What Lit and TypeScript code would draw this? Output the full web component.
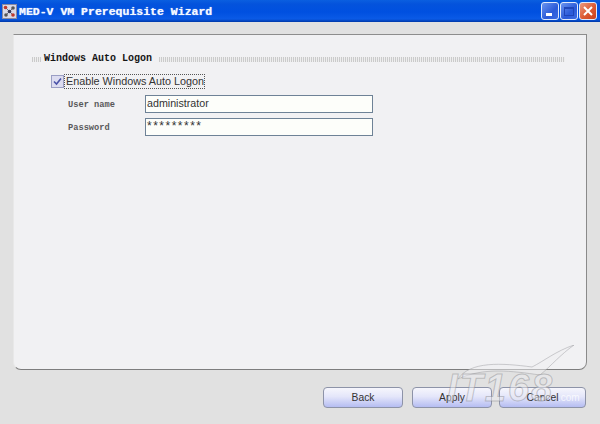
import { LitElement, html, css } from "lit";
import { customElement } from "lit/decorators.js";

@customElement("app-root")
export class AppRoot extends LitElement {
  static styles = css`
    :host { display: block; width: 600px; height: 424px; overflow: hidden; position: relative; }
    .win { width: 600px; height: 424px; background: #e1e1e1; display: flex; flex-direction: column; font-family: "Liberation Sans", Arial, sans-serif; color: #222; }
    .title { height: 22px; flex: none; background: linear-gradient(#0a5fe0 0, #0453dc 4px, #0050e0 12px, #0a5ae6 19px, #0038a8 22px); display: flex; align-items: center; padding-left: 2px; gap: 2px; }
    .appicon { width: 15px; height: 15px; flex: none; display: block; }
    .ttext { font: bold 11.5px "Liberation Mono", monospace; color: #f4f8ff; white-space: pre; flex: 1; text-shadow: 0 0 1px #cfe0ff; }
    .tb { display: flex; gap: 1px; padding-right: 3px; }
    .btn { width: 18px; height: 18px; border: 1px solid #dfe9fb; border-radius: 3px; box-sizing: border-box; display: flex; align-items: center; justify-content: center; background: linear-gradient(135deg, #6a94ef, #2a5ad8 60%, #3c6ce4); }
    .btn svg { display: block; }
    .btn.close { background: linear-gradient(135deg, #eb9a80, #dc5a33 55%, #c8401e); }
    .main { flex: 1; padding: 12px 13px 0 13px; }
    .panel { height: 336px; box-sizing: border-box; background: #f1f1f3; border-top: 1px solid #8d8d8d; border-right: 1px solid #8a8a8a; border-bottom: 1px solid #7d7d7d; border-left: 1px solid #e8e8e8; border-radius: 0 0 8px 8px; padding: 16px 21px 0 18px; }
    .group { display: flex; align-items: center; height: 14px; }
    .dots { height: 5px; margin-top: 3px; background-image: repeating-linear-gradient(90deg, #c6c6c6 0 1px, #eeeeee 1px 2px); opacity: .9; }
    .dots.l { width: 9px; margin-right: 3px; }
    .dots.r { flex: 1; }
    .gtext { font: bold 10px "Liberation Mono", monospace; color: #151515; padding: 0 7px 0 0; white-space: pre; }
    .check { display: flex; align-items: center; margin: 9px 0 0 19px; height: 15px; }
    .box { width: 11px; height: 11px; border: 1px solid #9a9ec4; background: #dcdcf0; box-sizing: content-box; display: block; }
    .ctext { font-size: 10.8px; color: #333; border: 1px dotted #555; padding: 0 0 0 1px; line-height: 13px; white-space: pre; }
    .row { display: flex; align-items: center; margin-left: 36px; }
    .row.u { margin-top: 6px; }
    .row.p { margin-top: 5px; }
    .lbl { width: 77px; padding-top: 2px; font: bold 8.7px "Liberation Mono", monospace; color: #333; opacity: .8; white-space: pre; }
    .inp { width: 228px; height: 18px; box-sizing: border-box; border: 1px solid #6e8296; background: #fdfefa; font-size: 10.7px; color: #333; padding-left: 1px; line-height: 15px; white-space: pre; }
    .pw { font-size: 12px; letter-spacing: 1.5px; }
    .foot { flex: 1; display: flex; justify-content: flex-end; padding: 17px 14px 0 0; box-sizing: border-box; }
    .b { width: 80px; height: 21px; box-sizing: border-box; border: 1px solid #8d93a8; border-radius: 4px; background: linear-gradient(#f6f6fc, #e4e6fa 45%, #b5bdf2); font-size: 10.3px; color: #333; display: flex; align-items: center; justify-content: center; }
    .b.apply { margin: 0 7px 0 9px; }
    .b.cancel { width: 87px; }
    .wm { position: absolute; left: 440px; top: 345px; width: 160px; height: 79px; pointer-events: none; }
    .wmt { position: absolute; left: 7px; top: 22px; font: italic bold 38px "Liberation Sans", sans-serif; color: rgba(235,235,240,.5); -webkit-text-stroke: 1px rgba(125,125,130,.42); letter-spacing: 2px; white-space: pre; }
    .wmc { position: absolute; left: 118px; top: 47px; font: 10px "Liberation Sans", sans-serif; color: rgba(255,255,255,.75); }
    .wm svg { position: absolute; left: 0; top: 0; }
  `;

  render() {
    return html`
      <div class="win">
        <div class="title">
          <svg class="appicon" viewBox="0 0 15 15">
            <rect width="15" height="15" fill="#d9d9e6"/>
            <rect x=".5" y=".5" width="14" height="14" fill="none" stroke="#8a8aa0"/>
            <path d="M3 3 L11 11 M11 4 L4 11" stroke="#6d6d80" stroke-width="1"/>
            <circle cx="3.5" cy="3.5" r="1.8" fill="#c0392b"/><circle cx="11" cy="4" r="1.8" fill="#555"/>
            <circle cx="7.5" cy="7.5" r="1.8" fill="#3a3a58"/><circle cx="4" cy="11" r="1.8" fill="#555"/>
            <circle cx="11" cy="11" r="1.8" fill="#c0392b"/>
          </svg>
          <span class="ttext">MED-V VM Prerequisite Wizard</span>
          <div class="tb">
            <div class="btn"><svg width="12" height="12" viewBox="0 0 12 12"><rect x="2" y="8" width="6" height="3" fill="#fff"/></svg></div>
            <div class="btn"><svg width="12" height="12" viewBox="0 0 12 12"><rect x="1.5" y="2.5" width="9" height="8" fill="none" stroke="#1f46b8" stroke-width="1"/><rect x="1" y="2" width="10" height="2" fill="#1f46b8"/></svg></div>
            <div class="btn close"><svg width="12" height="12" viewBox="0 0 12 12"><path d="M2 2 L10 10 M10 2 L2 10" stroke="#fff" stroke-width="2"/></svg></div>
          </div>
        </div>
        <div class="main">
          <div class="panel">
            <div class="group"><div class="dots l"></div><span class="gtext">Windows Auto Logon</span><div class="dots r"></div></div>
            <div class="check">
              <svg class="box" viewBox="0 0 11 11"><path d="M2 5.5 L4.5 8 L9 2.5" fill="none" stroke="#4a52a8" stroke-width="1.6"/></svg>
              <span class="ctext">Enable Windows Auto Logon</span>
            </div>
            <div class="row u"><span class="lbl">User name</span><div class="inp">administrator</div></div>
            <div class="row p"><span class="lbl">Password</span><div class="inp pw">*********</div></div>
          </div>
        </div>
        <div class="foot">
          <div class="b">Back</div><div class="b apply">Apply</div><div class="b cancel">Cancel</div>
        </div>
      </div>
      <div class="wm">
        <svg width="160" height="79" viewBox="0 0 160 79"><path d="M18 34 C30 16 62 18 92 22 C104 16 116 6 134 0 C120 10 112 20 100 30 C72 26 44 22 18 34 Z" fill="rgba(240,240,242,.5)" stroke="rgba(150,150,155,.45)" stroke-width="1"/></svg>
        <span class="wmt">IT168</span>
        <span class="wmc">.com</span>
      </div>
    `;
  }
}
